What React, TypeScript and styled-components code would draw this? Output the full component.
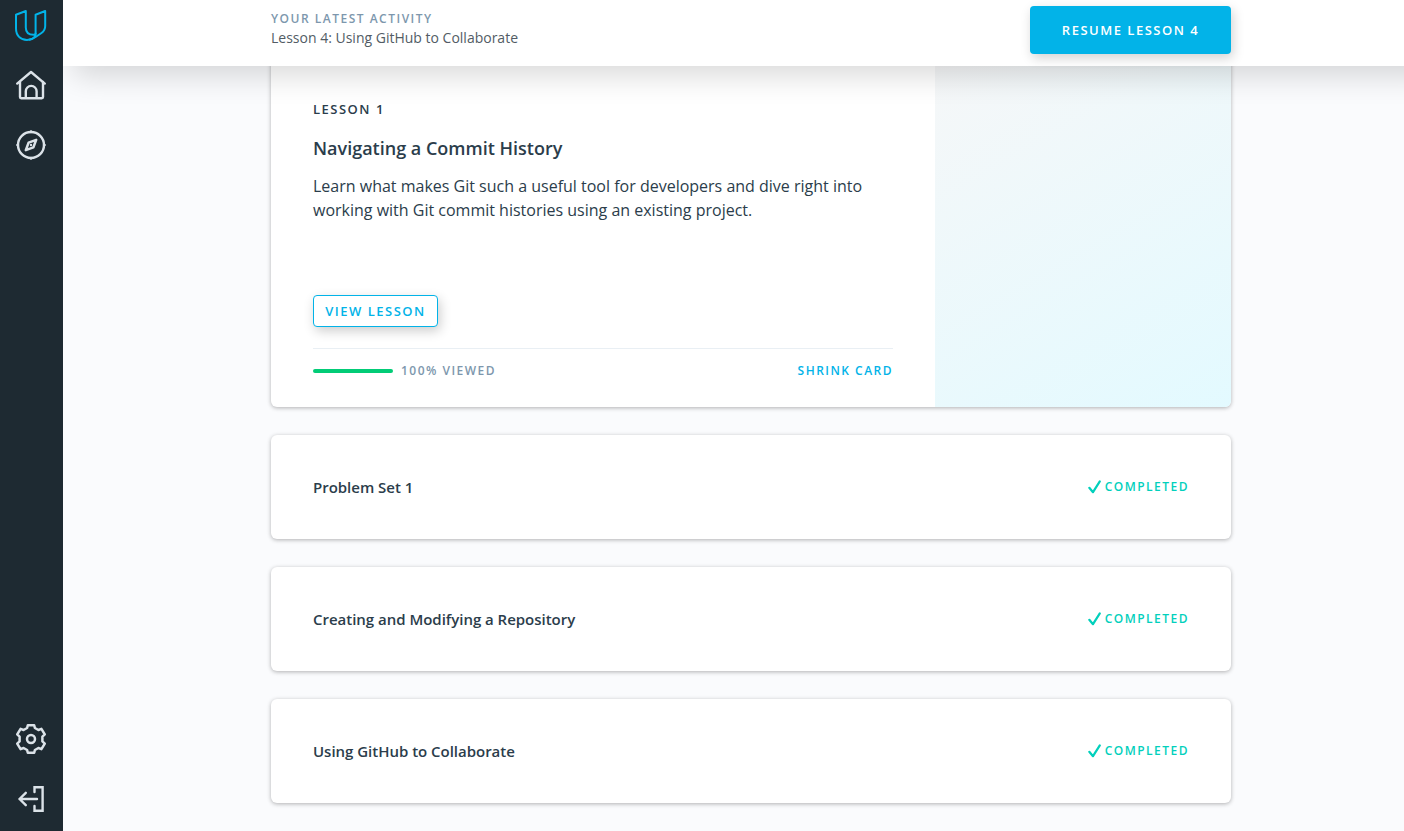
import React from "react";
import styled, { createGlobalStyle } from "styled-components";

const GlobalStyle = createGlobalStyle`
  *, *::before, *::after { box-sizing: border-box; }
  html, body { margin: 0; height: 100%; overflow: hidden; }
  body { font-family: "Open Sans", sans-serif; color: #2b3d4b; background: #fafbfd; }
  h1, h2, h3, p { margin: 0; }
  button { font-family: inherit; cursor: pointer; }
`;

const Shell = styled.div`
  display: grid;
  grid-template-columns: 63px 1fr;
  height: 100vh;
  overflow: hidden;
`;

const Sidebar = styled.nav`
  display: flex;
  flex-direction: column;
  justify-content: space-between;
  padding: 9px 0 16px;
  background: #1e2a32;
  position: relative;
  z-index: 3;
`;

const NavGroup = styled.div`
  display: flex;
  flex-direction: column;
  gap: 28px;
  padding-left: 15px;
`;

const NavLink = styled.a`
  display: block;
  width: 32px;
  height: 32px;
  svg { display: block; }
`;

const Page = styled.div`
  display: flex;
  flex-direction: column;
  min-width: 0;
  height: 100vh;
`;

const Header = styled.header`
  flex: none;
  display: flex;
  justify-content: space-between;
  align-items: flex-start;
  height: 66px;
  padding: 6px 173px 0 208px;
  background: #fff;
  box-shadow: 20px 0 30px 10px rgba(0, 0, 0, 0.15);
  position: relative;
  z-index: 2;
`;

const Eyebrow = styled.p`
  font-size: 12px;
  line-height: 16px;
  font-weight: 600;
  letter-spacing: 1.5px;
  text-transform: uppercase;
  color: #7d97ad;
  padding-top: 5px;
`;

const Activity = styled.p`
  font-size: 14px;
  line-height: 22px;
  color: #525c65;
`;

const PrimaryButton = styled.button`
  width: 201px;
  height: 48px;
  padding: 0;
  border: 0;
  border-radius: 4px;
  background: #02b3e8;
  color: #fff;
  font-size: 13px;
  font-weight: 600;
  letter-spacing: 1.5px;
  text-transform: uppercase;
  box-shadow: 2px 4px 12px rgba(0, 0, 0, 0.18);
`;

const Content = styled.main`
  flex: 1;
  min-height: 0;
  overflow: hidden;
  padding-left: 208px;
`;

const Lessons = styled.div`
  display: flex;
  flex-direction: column;
  gap: 28px;
  width: 960px;
  margin-top: -10px;
`;

const Card = styled.section`
  display: flex;
  border-radius: 6px;
  background: #fff;
  box-shadow: 0 1px 4px rgba(0, 0, 0, 0.3);
  overflow: hidden;
`;

const ExpandedCard = styled(Card)`
  height: 351px;
`;

const LessonBody = styled.div`
  display: flex;
  flex-direction: column;
  align-items: flex-start;
  width: 664px;
  padding: 43px 42px 0;
`;

const LessonArt = styled.div`
  flex: 1;
  background: linear-gradient(150deg, #f6f7f8 0%, #e3faff 100%);
`;

const LessonNumber = styled.h3`
  font-size: 13px;
  line-height: 20px;
  font-weight: 600;
  letter-spacing: 1.5px;
  text-transform: uppercase;
`;

const LessonTitle = styled.h2`
  margin-top: 16px;
  font-size: 18px;
  line-height: 26px;
  font-weight: 600;
`;

const Description = styled.p`
  margin-top: 13px;
  font-size: 16px;
  line-height: 24px;
`;

const OutlineButton = styled.button`
  width: 125px;
  height: 32px;
  margin-top: 73px;
  padding: 0;
  border: 1px solid #02b3e8;
  border-radius: 4px;
  background: #fff;
  color: #02b3e8;
  font-size: 13px;
  font-weight: 600;
  letter-spacing: 1.5px;
  text-transform: uppercase;
  box-shadow: 2px 4px 12px rgba(0, 0, 0, 0.2);
`;

const CardFooter = styled.div`
  display: flex;
  justify-content: space-between;
  align-items: center;
  width: 580px;
  height: 45px;
  margin-top: 21px;
  border-top: 1px solid #e9eff4;
`;

const Progress = styled.div`
  display: flex;
  align-items: center;
  gap: 8px;
`;

const ProgressBar = styled.span`
  width: 80px;
  height: 4px;
  border-radius: 2px;
  background: #02cc77;
`;

const Label = styled.span<{ $color: string }>`
  font-size: 12px;
  line-height: 16px;
  font-weight: 600;
  letter-spacing: 1.48px;
  text-transform: uppercase;
  color: ${(p) => p.$color};
`;

const CompactCard = styled(Card)`
  align-items: center;
  justify-content: space-between;
  height: 104px;
  padding: 0 42px;
`;

const CompactTitle = styled.h2`
  font-size: 15px;
  line-height: 24px;
  font-weight: 600;
  letter-spacing: -0.02px;
`;

const Status = styled.div`
  display: flex;
  align-items: center;
  gap: 4px;
`;

const NavIcon = ({ children, color = "#dbe2e8", width = 2.4 }: { children: React.ReactNode; color?: string; width?: number }) => (
  <svg width="32" height="32" viewBox="0 0 32 32" fill="none" stroke={color} strokeWidth={width} strokeLinecap="round" strokeLinejoin="round">
    {children}
  </svg>
);

const LogoIcon = () => (
  <NavIcon color="#02b3e8" width={2}>
    <path d="M10.8 2 L1 5.8 V19.5 C1 26.5 5.5 31 12 31 C15.5 31 18.5 29.5 20.6 28 L26.5 24 C29 22.3 30.2 20 30.2 17 V2 L20.6 5.8 V24.5 C20.6 25.5 19.6 25.8 18.6 25.8 C14 25.8 10.8 23.3 10.8 18.5 Z" />
    <path d="M20.6 24.5 C20.6 27.5 18 30 14.5 30.8" />
  </NavIcon>
);

const HomeIcon = () => (
  <NavIcon>
    <path d="M2.2 14.6 L16 3 L29.8 14.6" />
    <path d="M5 13 V28 Q5 29.2 6.2 29.2 H26.8 Q28 29.2 28 28 V13" />
    <path d="M10.8 28.5 V22.3 A5.4 5.4 0 0 1 21.6 22.3 V28.5" />
  </NavIcon>
);

const CompassIcon = () => (
  <NavIcon>
    <circle cx="16" cy="16" r="13" />
    <path d="M16 2.4 V3 M16 29 V29.6 M2.4 16 H3 M29 16 H29.6" />
    <path d="M21.2 10.8 L13.6 13.6 L10.8 21.2 L18.4 18.4 Z" strokeWidth="2.5" />
    <circle cx="16" cy="16" r="0.6" strokeWidth="1.2" />
  </NavIcon>
);

const GearIcon = () => (
  <NavIcon width={2.5}>
    <path d="M12.8 2.2 H19.2 L19.9 5 L23.4 7 L26.4 5.8 L29.8 11.4 L27.4 13.6 V18.4 L29.8 20.6 L26.4 26.2 L23.4 25 L19.9 27 L19.2 29.8 H12.8 L12.1 27 L8.6 25 L5.6 26.2 L2.2 20.6 L4.6 18.4 V13.6 L2.2 11.4 L5.6 5.8 L8.6 7 L12.1 5 Z" />
    <circle cx="16" cy="16" r="4" />
  </NavIcon>
);

const ExitIcon = () => (
  <NavIcon>
    <path d="M19.5 9 V4.2 H27.6 V27.8 H19.5 V23" strokeLinejoin="miter" />
    <path d="M22 16 H4.5 M10.8 9.8 L4.5 16 L10.8 22.2" />
  </NavIcon>
);

const CheckIcon = () => (
  <svg width="13" height="14" viewBox="0 0 13 14" fill="none" stroke="#02d0bc" strokeWidth="2.2" strokeLinecap="round" strokeLinejoin="round">
    <path d="M1.3 7.8 L5 12.2 L11.8 1.4" />
  </svg>
);

const completedLessons = [
  "Problem Set 1",
  "Creating and Modifying a Repository",
  "Using GitHub to Collaborate",
];

export default function App() {
  return (
    <>
      <GlobalStyle />
      <Shell>
        <Sidebar>
          <NavGroup>
            <NavLink aria-label="Home page"><LogoIcon /></NavLink>
            <NavLink aria-label="Classroom"><HomeIcon /></NavLink>
            <NavLink aria-label="Catalog"><CompassIcon /></NavLink>
          </NavGroup>
          <NavGroup>
            <NavLink aria-label="Settings"><GearIcon /></NavLink>
            <NavLink aria-label="Sign out"><ExitIcon /></NavLink>
          </NavGroup>
        </Sidebar>
        <Page>
          <Header>
            <div>
              <Eyebrow>Your latest activity</Eyebrow>
              <Activity>Lesson 4: Using GitHub to Collaborate</Activity>
            </div>
            <PrimaryButton>Resume Lesson 4</PrimaryButton>
          </Header>
          <Content>
            <Lessons>
              <ExpandedCard>
                <LessonBody>
                  <LessonNumber>Lesson 1</LessonNumber>
                  <LessonTitle>Navigating a Commit History</LessonTitle>
                  <Description>
                    Learn what makes Git such a useful tool for developers and dive right into working with Git commit histories using an existing project.
                  </Description>
                  <OutlineButton>View Lesson</OutlineButton>
                  <CardFooter>
                    <Progress>
                      <ProgressBar />
                      <Label $color="#7d97ad">100% viewed</Label>
                    </Progress>
                    <Label $color="#02b3e8">Shrink card</Label>
                  </CardFooter>
                </LessonBody>
                <LessonArt />
              </ExpandedCard>
              {completedLessons.map((title) => (
                <CompactCard key={title}>
                  <CompactTitle>{title}</CompactTitle>
                  <Status>
                    <CheckIcon />
                    <Label $color="#02d0bc">Completed</Label>
                  </Status>
                </CompactCard>
              ))}
            </Lessons>
          </Content>
        </Page>
      </Shell>
    </>
  );
}
